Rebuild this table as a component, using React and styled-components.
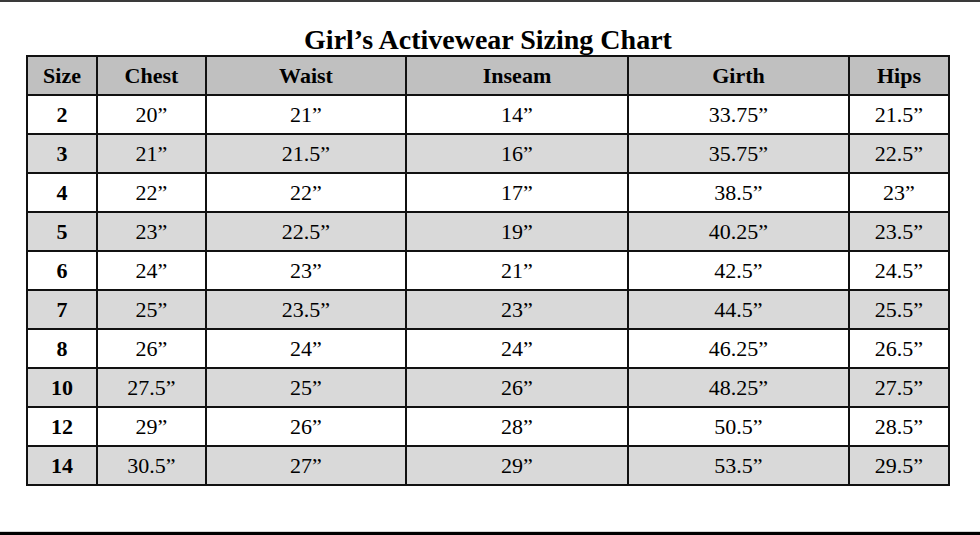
import React from "react";
import styled, { createGlobalStyle } from "styled-components";

const columns = ["Size", "Chest", "Waist", "Inseam", "Girth", "Hips"];

const rows = [
  ["2", "20”", "21”", "14”", "33.75”", "21.5”"],
  ["3", "21”", "21.5”", "16”", "35.75”", "22.5”"],
  ["4", "22”", "22”", "17”", "38.5”", "23”"],
  ["5", "23”", "22.5”", "19”", "40.25”", "23.5”"],
  ["6", "24”", "23”", "21”", "42.5”", "24.5”"],
  ["7", "25”", "23.5”", "23”", "44.5”", "25.5”"],
  ["8", "26”", "24”", "24”", "46.25”", "26.5”"],
  ["10", "27.5”", "25”", "26”", "48.25”", "27.5”"],
  ["12", "29”", "26”", "28”", "50.5”", "28.5”"],
  ["14", "30.5”", "27”", "29”", "53.5”", "29.5”"],
];

const shades = {
  header: "#c0c0c0",
  odd: "#ffffff",
  even: "#d9d9d9",
};

/*
  Girl's activewear sizing chart, header row plus alternating shaded rows
*/
const App = () => {
  return (
    <>
      <GlobalStyle />
      <Page>
        <Title>Girl’s Activewear Sizing Chart</Title>
        <Chart>
          <Row>
            {columns.map((col) => (
              <Cell key={col} $shade={shades.header} $bold>
                {col}
              </Cell>
            ))}
          </Row>
          {rows.map((row, i) => (
            <Row key={row[0]}>
              {row.map((value, j) => (
                <Cell
                  key={j}
                  $shade={i % 2 === 0 ? shades.odd : shades.even}
                  $bold={j === 0}
                >
                  {value}
                </Cell>
              ))}
            </Row>
          ))}
        </Chart>
        <Spacer />
        <BottomBar />
      </Page>
    </>
  );
};

const GlobalStyle = createGlobalStyle`
  html, body {
    margin: 0;
    padding: 0;
    background: #ffffff;
  }
`;

const Page = styled.div`
  width: 980px;
  height: 535px;
  box-sizing: border-box;
  border-top: 2px solid #3a3a3a;
  display: flex;
  flex-direction: column;
  padding-left: 26px;
  font-family: "Liberation Serif", "Times New Roman", serif;
  color: #000;
`;

const Title = styled.h1`
  margin: 0;
  width: 924px;
  height: 53px;
  box-sizing: border-box;
  padding-top: 24px;
  font-size: 28px;
  line-height: 28px;
  font-weight: bold;
  text-align: center;
`;

const Chart = styled.div`
  width: 924px;
  box-sizing: border-box;
  border: 2px solid #111;
  background: #111;
  display: flex;
  flex-direction: column;
  gap: 2px;
`;

const Row = styled.div`
  display: grid;
  grid-template-columns: 68px 107px 198px 220px 219px 98px;
  gap: 2px;
  height: 37px;
`;

const Cell = styled.div`
  background: ${(p) => p.$shade};
  display: flex;
  align-items: center;
  justify-content: center;
  font-size: 22px;
  font-weight: ${(p) => (p.$bold ? "bold" : "normal")};
`;

const Spacer = styled.div`
  flex: 1;
`;

const BottomBar = styled.div`
  margin-left: -26px;
  height: 3px;
  background: #000;
  border-top: 1px solid #d4d4d4;
  box-shadow: 0 -1px 0 #ffffff;
`;

export default App;
